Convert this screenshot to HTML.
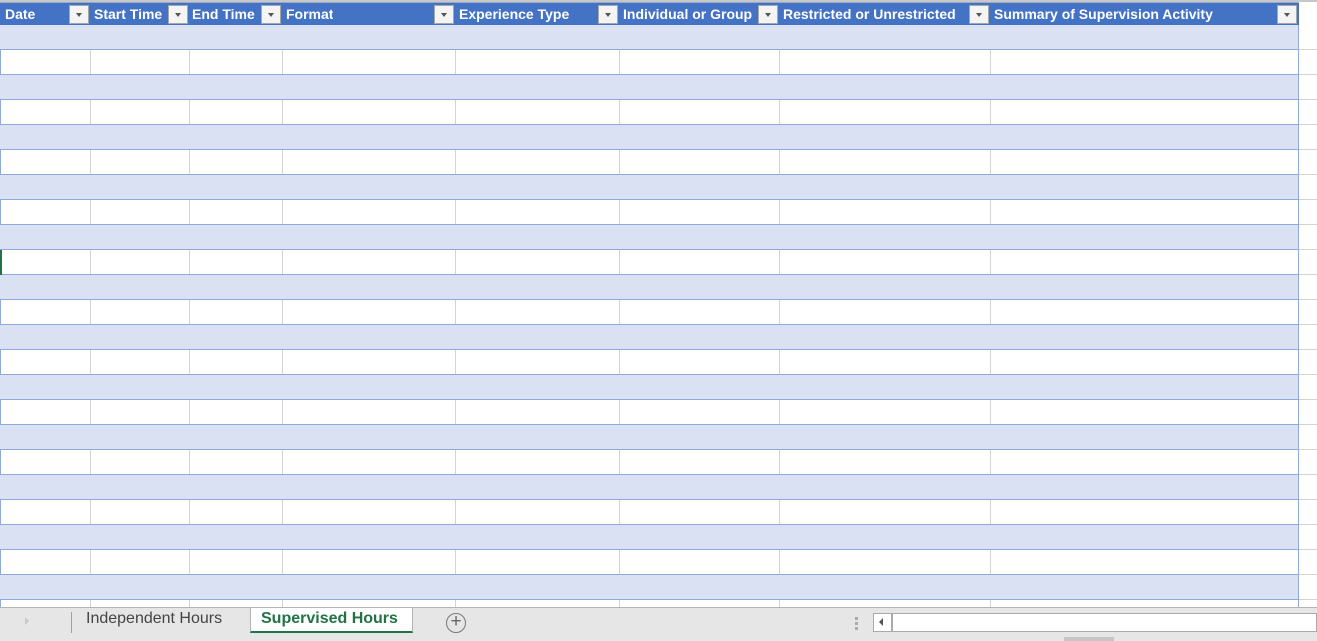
<!DOCTYPE html>
<html><head><style>
*{margin:0;padding:0;box-sizing:border-box}
body{width:1317px;height:641px;overflow:hidden;background:#fff;position:relative;font-family:"Liberation Sans",sans-serif}
.abs{position:absolute}
.hdr{position:absolute;top:2px;left:0;width:1299px;height:23px;background:#4472C4;border-top:1px solid #9aa9c9}
.h{position:absolute;top:3px;color:#fff;font-weight:bold;font-size:14px;white-space:nowrap;overflow:hidden}
.dd{position:absolute;top:2px;width:20px;height:19px;background:#f4f4f4;border:1px solid #a6a6a6}
.dd:after{content:"";position:absolute;left:6px;top:7px;border-left:3px solid transparent;border-right:3px solid transparent;border-top:4px solid #555}
.row{position:absolute;left:0;width:1317px;height:25px;border-bottom:1px solid #d4d4d4}
.band{position:absolute;left:0;width:1299px;height:25px;background:#D9E1F2;border-bottom:1px solid #8EA9DB;border-right:1px solid #8EA9DB}
.wt{position:absolute;left:0;width:1299px;height:25px;border-bottom:1px solid #8EA9DB;border-right:1px solid #8EA9DB}
.v{position:absolute;top:25px;height:582px;width:1px;background:#d4d4d4}
</style></head><body>
<div class="abs" style="left:0;top:0;width:1317px;height:2px;background:#c8c8c8"></div>
<div class="v" style="left:90px"></div><div class="v" style="left:189px"></div><div class="v" style="left:282px"></div><div class="v" style="left:455px"></div><div class="v" style="left:619px"></div><div class="v" style="left:779px"></div><div class="v" style="left:990px"></div>
<div class="abs" style="left:1298px;top:2px;width:1px;height:605px;background:#8EA9DB"></div>
<div class="abs" style="left:0;top:2px;width:1px;height:605px;background:#8EA9DB"></div>
<div class="band" style="top:25px"></div><div class="wt" style="top:50px"></div>
<div class="band" style="top:75px"></div><div class="wt" style="top:100px"></div>
<div class="band" style="top:125px"></div><div class="wt" style="top:150px"></div>
<div class="band" style="top:175px"></div><div class="wt" style="top:200px"></div>
<div class="band" style="top:225px"></div><div class="wt" style="top:250px"></div>
<div class="band" style="top:275px"></div><div class="wt" style="top:300px"></div>
<div class="band" style="top:325px"></div><div class="wt" style="top:350px"></div>
<div class="band" style="top:375px"></div><div class="wt" style="top:400px"></div>
<div class="band" style="top:425px"></div><div class="wt" style="top:450px"></div>
<div class="band" style="top:475px"></div><div class="wt" style="top:500px"></div>
<div class="band" style="top:525px"></div><div class="wt" style="top:550px"></div>
<div class="band" style="top:575px"></div>
<div class="abs" style="left:1299px;top:25px;width:18px;height:582px;background:repeating-linear-gradient(to bottom,transparent 0,transparent 24px,#d4d4d4 24px,#d4d4d4 25px)"></div>
<div class="abs" style="left:0;top:250px;width:2px;height:25px;background:#217346"></div>
<div class="hdr">
<div class="h" style="left:5px;width:64px">Date</div><div class="dd" style="left:69px"></div>
<div class="h" style="left:94px;width:74px">Start Time</div><div class="dd" style="left:168px"></div>
<div class="h" style="left:192px;width:69px">End Time</div><div class="dd" style="left:261px"></div>
<div class="h" style="left:286px">Format</div><div class="dd" style="left:434px"></div>
<div class="h" style="left:459px">Experience Type</div><div class="dd" style="left:598px"></div>
<div class="h" style="left:623px;width:135px">Individual or Group</div><div class="dd" style="left:758px"></div>
<div class="h" style="left:783px;width:186px">Restricted or Unrestricted</div><div class="dd" style="left:969px"></div>
<div class="h" style="left:994px">Summary of Supervision Activity</div><div class="dd" style="left:1277px"></div>
</div>
<div class="abs" style="left:0;top:607px;width:1317px;height:34px;background:#e6e6e6;border-top:1px solid #b4b4b4"></div>
<div class="abs" style="left:25px;top:617px;border-top:4px solid transparent;border-bottom:4px solid transparent;border-left:4px solid #c8c8c8"></div>
<div class="abs" style="left:71px;top:612px;width:1px;height:21px;background:#a0a0a0"></div>
<div class="abs" style="left:86px;top:610px;font-size:16px;color:#444">Independent Hours</div>
<div class="abs" style="left:250px;top:608px;width:163px;height:25px;background:#fff;border-bottom:2px solid #217346;border-left:1px solid #b4b4b4;border-right:1px solid #b4b4b4"></div>
<div class="abs" style="left:261px;top:610px;font-size:16px;font-weight:bold;color:#217346">Supervised Hours</div>
<div class="abs" style="left:446px;top:613px;width:20px;height:20px;border:1.5px solid #777;border-radius:50%;color:#666;font-size:19px;line-height:16px;text-align:center">+</div>
<div class="abs" style="left:855px;top:617px;width:3px;height:3px;background:#aaa;box-shadow:0 5px 0 #aaa,0 10px 0 #aaa"></div>
<div class="abs" style="left:873px;top:613px;width:444px;height:19px;background:#fff;border:1px solid #aaa"></div>
<div class="abs" style="left:891px;top:614px;width:2px;height:17px;background:#aaa"></div>
<div class="abs" style="left:879px;top:618px;border-top:4px solid transparent;border-bottom:4px solid transparent;border-right:4px solid #555"></div>
<div class="abs" style="left:1064px;top:637px;width:50px;height:4px;background:#c6c6c6"></div>
</body></html>
